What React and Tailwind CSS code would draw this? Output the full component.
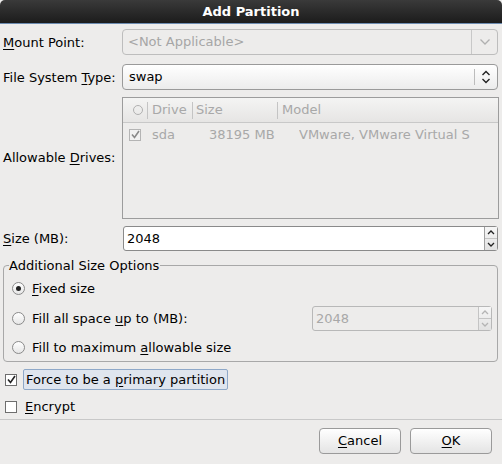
import React from "react";

const U = ({ children }) => <span className="underline underline-offset-2">{children}</span>;

/* ─── small drawings ─── */
const ChevronDown = ({ color = "#b0b0b0" }) => (
    <svg width="12" height="8" viewBox="0 0 12 8">
        <path d="M1.5 1.5 L6 6 L10.5 1.5" fill="none" stroke={color} strokeWidth="1.3" />
    </svg>
);

const UpDown = ({ color = "#222" }) => (
    <svg width="10" height="14" viewBox="0 0 10 14">
        <path d="M1.5 5 L5 1.5 L8.5 5" fill="none" stroke={color} strokeWidth="1.4" />
        <path d="M1.5 9 L5 12.5 L8.5 9" fill="none" stroke={color} strokeWidth="1.4" />
    </svg>
);

const Check = ({ color = "#222" }) => (
    <svg width="9" height="9" viewBox="0 0 9 9">
        <path d="M1 4.5 L3.5 7.5 L8 1" fill="none" stroke={color} strokeWidth="1.6" />
    </svg>
);

const Spin = ({ value, disabled, className }) => (
    <div className={`flex border rounded-[3px] ${disabled ? "border-[#b8b8b8] bg-[#edeceb]" : "border-[#8a8a8a] bg-white"} ${className}`}>
        <div className={`flex-1 flex items-center pl-[3px] ${disabled ? "text-[#a8a8a8]" : "text-black"}`}>{value}</div>
        <div className={`w-[13px] flex flex-col border-l ${disabled ? "border-[#c4c4c4]" : "border-[#a0a0a0]"} bg-gradient-to-b from-[#f6f6f6] to-[#e2e2e2]`}>
            <div className="flex-1 flex items-center justify-center border-b border-[#c4c4c4]">
                <svg width="8" height="5" viewBox="0 0 8 5"><path d="M1 4 L4 1 L7 4" fill="none" stroke={disabled ? "#b4b4b4" : "#222"} strokeWidth="1.3" /></svg>
            </div>
            <div className="flex-1 flex items-center justify-center">
                <svg width="8" height="5" viewBox="0 0 8 5"><path d="M1 1 L4 4 L7 1" fill="none" stroke={disabled ? "#b4b4b4" : "#222"} strokeWidth="1.3" /></svg>
            </div>
        </div>
    </div>
);

const Radio = ({ checked }) => (
    <span className="w-[13px] h-[13px] rounded-full border border-[#8a8a8a] bg-gradient-to-b from-white to-[#e6e6e6] flex items-center justify-center">
        {checked && <span className="w-[5px] h-[5px] rounded-full bg-[#222]" />}
    </span>
);

const Box = ({ checked }) => (
    <span className="w-[12px] h-[12px] border border-[#6e6e6e] bg-white flex items-center justify-center">
        {checked && <Check />}
    </span>
);

export default function App() {
    return (
        <div className="w-[502px] h-[464px] bg-[#edeceb] flex flex-col text-[13px] text-black overflow-hidden" style={{ fontFamily: '"DejaVu Sans", sans-serif' }}>

            {/* Title bar */}
            <div className="h-[24px] rounded-t-[5px] bg-gradient-to-b from-[#3a3a3a] to-[#1c1c1c] border-b border-[#6c8bb0] flex items-center justify-center text-white font-bold shrink-0">
                Add Partition
            </div>

            {/* Form grid */}
            <div className="grid grid-cols-[119px_1fr] pl-[3px] pr-[4px] mt-[5px] items-center">
                <div className="pt-[1px]"><U>M</U>ount Point:</div>
                <div className="h-[26px] flex border border-[#bdbdbd] rounded-[4px] bg-[#edeceb] text-[#a6a6a6]">
                    <div className="flex-1 flex items-center pl-[5px]">&lt;Not Applicable&gt;</div>
                    <div className="w-[26px] border-l border-[#c8c8c8] flex items-center justify-center"><ChevronDown /></div>
                </div>

                <div className="mt-[9px] pt-[1px]">File System <U>T</U>ype:</div>
                <div className="mt-[9px] h-[26px] flex border border-[#9a9a9a] rounded-[4px] bg-gradient-to-b from-white to-[#ececec]">
                    <div className="flex-1 flex items-center pl-[6px]">swap</div>
                    <div className="my-[4px] border-l border-[#bcbcbc]" />
                    <div className="w-[22px] flex items-center justify-center"><UpDown /></div>
                </div>

                <div className="mt-[7px]">Allowable <U>D</U>rives:</div>
                <div className="mt-[7px] h-[122px] border border-[#9c9c9c] bg-[#edeceb] text-[#a8a8a8] overflow-hidden mr-[-1px]">
                    <div className="h-[25px] flex items-center border-b border-[#c8c8c8] bg-gradient-to-b from-[#f4f4f3] to-[#e6e5e4] whitespace-nowrap">
                        <div className="w-[24px] flex justify-end pr-[4px]">
                            <span className="w-[10px] h-[10px] rounded-full border border-[#b0b0b0]" />
                        </div>
                        <div className="w-[45px] h-[17px] border-l border-[#c4c4c4] pl-[4px] flex items-center">Drive</div>
                        <div className="w-[85px] h-[17px] border-l border-[#c4c4c4] pl-[3px] flex items-center">Size</div>
                        <div className="flex-1 h-[17px] border-l border-[#c4c4c4] pl-[4px] flex items-center">Model</div>
                    </div>
                    <div className="h-[23px] flex items-center whitespace-nowrap">
                        <div className="w-[29px] flex pl-[6px]">
                            <span className="w-[12px] h-[12px] border border-[#b4b4b4] bg-[#f2f2f2] flex items-center justify-center"><Check color="#8a8a8a" /></span>
                        </div>
                        <div className="w-[57px]">sda</div>
                        <div className="w-[90px]">38195 MB</div>
                        <div className="w-[175px] overflow-hidden">VMware, VMware Virtual S</div>
                    </div>
                </div>

                <div className="mt-[7px]"><U>S</U>ize (MB):</div>
                <Spin value="2048" className="mt-[7px] h-[25px] ml-[1px]" />
            </div>

            {/* Additional Size Options frame */}
            <fieldset className="mx-[3px] mr-[4px] mt-[5px] h-[106px] border border-[#a8a8a8] rounded-[4px] px-[6px]">
                <legend className="ml-[-1px] pr-[1px]">Additional Size Options</legend>
                <div className="flex items-center gap-[7px] h-[30px] pl-[2px] mt-[-2px]">
                    <Radio checked /> <span><U>F</U>ixed size</span>
                </div>
                <div className="flex items-center h-[30px] pl-[2px]">
                    <Radio /> <span className="ml-[7px]">Fill all space <U>u</U>p to (MB):</span>
                    <Spin value="2048" disabled className="ml-auto mr-[-1px] w-[180px] h-[25px]" />
                </div>
                <div className="flex items-center gap-[7px] h-[28px] pl-[2px]">
                    <Radio /> <span>Fill to maximum <U>a</U>llowable size</span>
                </div>
            </fieldset>

            {/* Checkboxes */}
            <div className="flex items-center pl-[5px] mt-[7px] h-[21px]">
                <Box checked />
                <span className="ml-[6px] h-[21px] pl-[2px] pr-[2px] leading-[19px] border border-[#8ea8c8] bg-[#dfe5ee] rounded-[2px]">Force to be a <U>p</U>rimary partition</span>
            </div>
            <div className="flex items-center pl-[5px] mt-[6px] h-[21px]">
                <Box />
                <span className="ml-[8px]"><U>E</U>ncrypt</span>
            </div>

            <div className="mt-[2px] border-t border-[#c8c8c8]" />

            {/* Buttons */}
            <div className="flex justify-end gap-[9px] pr-[10px] mt-[8px]">
                <button className="w-[82px] h-[26px] border border-[#9a9a9a] rounded-[4px] bg-gradient-to-b from-white to-[#e4e4e4]"><U>C</U>ancel</button>
                <button className="w-[82px] h-[26px] border border-[#9a9a9a] rounded-[4px] bg-gradient-to-b from-white to-[#e4e4e4]"><U>O</U>K</button>
            </div>
        </div>
    );
}
